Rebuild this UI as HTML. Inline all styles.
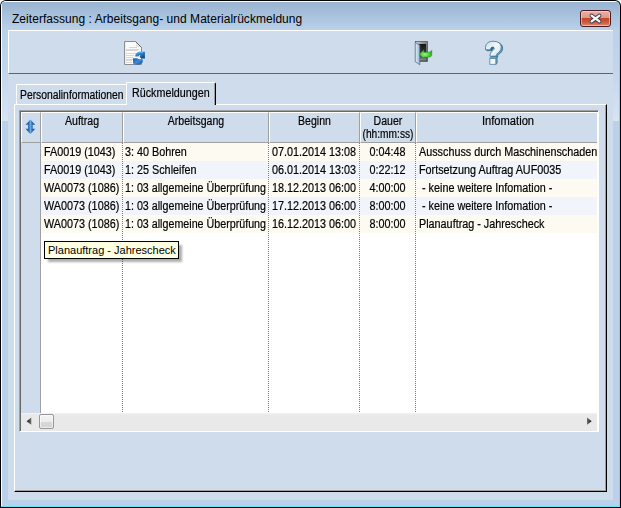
<!DOCTYPE html>
<html><head><meta charset="utf-8">
<style>
*{margin:0;padding:0;box-sizing:border-box}
html,body{width:621px;height:508px;overflow:hidden;background:#fff}
body{position:relative;font-family:"Liberation Sans",sans-serif;color:#000}
.a{position:absolute}
.t{position:absolute;white-space:pre;font-size:12px;line-height:normal;transform-origin:0 0;transform:scaleX(0.9);-webkit-text-stroke:0.2px #000}
.tc{text-align:center;transform-origin:50% 0}
.tt{position:absolute;white-space:pre;font-size:11px;line-height:normal}
.hc{position:absolute;top:112px;height:31px;background:#cfdcec;border-left:1px solid #fff;border-top:1px solid #fff;border-right:1px solid #a0a0a0;border-bottom:1px solid #a0a0a0}
.ht{position:absolute;left:-20px;right:-20px;text-align:center;font-size:12px;line-height:normal;white-space:pre;transform:scaleX(0.88);transform-origin:50% 0;-webkit-text-stroke:0.2px #000}
.dv{position:absolute;top:143px;width:1px;height:270px;background:repeating-linear-gradient(to bottom,#7a7a7a 0,#7a7a7a 1px,#fff 1px,#fff 2px)}
.row{position:absolute;left:41px;width:556px;height:18px}
</style></head><body>
<!-- window frame -->
<div class="a" style="left:0;top:0;width:621px;height:508px;background:#000;border-radius:6px 6px 0 0"></div>
<div class="a" style="left:1px;top:1px;width:619px;height:506px;background:#62e2f6;border-radius:5px 5px 0 0"></div>
<div class="a" style="left:1px;top:1px;width:618px;height:505px;background:#fff;border-radius:5px 5px 0 0"></div>
<div class="a" style="left:2px;top:2px;width:617px;height:504px;background:#b9d1ea;border-radius:3px 3px 0 0"></div>
<div class="a" style="left:2px;top:2px;width:617px;height:28px;background:linear-gradient(#99b4d1,#b9d1ea);border-radius:3px 3px 0 0"></div>
<div class="a" style="left:2px;top:30px;width:6px;height:91px;background:linear-gradient(rgba(255,255,255,0) 0,rgba(255,255,255,0.12) 45%,rgba(255,255,255,0.42) 100%)"></div>
<div class="a" style="left:613px;top:30px;width:6px;height:91px;background:linear-gradient(rgba(255,255,255,0) 0,rgba(255,255,255,0.12) 45%,rgba(255,255,255,0.42) 100%)"></div>
<!-- title -->
<div class="a" style="left:12px;top:13px;font-size:12px;line-height:12px;white-space:pre;letter-spacing:0.04px">Zeiterfassung : Arbeitsgang- und Materialrückmeldung</div>
<!-- close button -->
<div class="a" style="left:580px;top:10px;width:31px;height:17px;border:1px solid #4b1b24;border-radius:3px;background:linear-gradient(#eab0a3 0,#df9887 45%,#c5482a 50%,#cb5a3c 75%,#de8a74 100%);box-shadow:inset 0 0 0 1px rgba(255,225,215,0.55)"></div>
<svg class="a" style="left:586px;top:12px" width="20" height="14" viewBox="586 12 20 14">
 <path d="M591.6 15.6 L599.4 21.4 M599.4 15.6 L591.6 21.4" stroke="#39394a" stroke-width="4" stroke-linecap="round"/>
 <path d="M591.6 15.6 L599.4 21.4 M599.4 15.6 L591.6 21.4" stroke="#f6f6f6" stroke-width="2.3" stroke-linecap="round"/>
</svg>
<!-- client -->
<div class="a" style="left:8px;top:30px;width:605px;height:470px;background:#cfdcec"></div>
<!-- toolbar -->
<div class="a" style="left:8px;top:30px;width:605px;height:44px;border-top:1px solid #fff;border-left:1px solid #fff;border-bottom:1px solid #646464"></div>
<!-- doc refresh icon -->
<svg class="a" style="left:118px;top:36px" width="32" height="32" viewBox="118 36 32 32">
 <defs>
  <linearGradient id="pg" x1="0" x2="1"><stop offset="0" stop-color="#e6e6e6"/><stop offset="0.15" stop-color="#fdfdfd"/><stop offset="1" stop-color="#f6f6f6"/></linearGradient>
  <linearGradient id="bl" x1="0" y1="0" x2="1" y2="1"><stop offset="0" stop-color="#3f8fd8"/><stop offset="0.5" stop-color="#2a78c8"/><stop offset="1" stop-color="#0d3568"/></linearGradient>
  <linearGradient id="bl2" x1="0" y1="0" x2="1" y2="1"><stop offset="0" stop-color="#1d5fae"/><stop offset="0.5" stop-color="#3a8ad6"/><stop offset="1" stop-color="#174d90"/></linearGradient>
 </defs>
 <path d="M124.5 41.5 H135.5 L141.5 47.5 V64.5 H124.5 Z" fill="url(#pg)" stroke="#8e8e8e"/>
 <path d="M136 42 V47 H141 Z" fill="#e2e2e2"/>
 <path d="M135.5 41.5 L141.5 47.5" stroke="#6a6a6a"/>
 <g stroke="#d6d6d6" stroke-width="1">
  <path d="M129 47.5 H137 M126 49.5 H139 M126 50.5 H138 M126 53.5 H137 M126 55.5 H134 M126 57.5 H133 M126 59.5 H133 M126 60.5 H132 M126 62.5 H132"/>
 </g>
 <path d="M135.2 56.6 C135.2 53.6, 137.3 51.7, 140.3 51.7 H144.9 V58.6 H141.3 L139.5 57 L140.3 55.3 C139.6 55, 138.8 55.4, 138.5 56.6 Z" fill="url(#bl)"/>
 <path d="M133 58.2 H138.2 L136.6 60.4 C137.2 59.4, 137.8 59.1, 138.6 59 C140.2 59.2, 141.6 59.2, 142.8 59.6 V61.6 C142.6 63.6, 140.6 64.8, 137.6 64.8 H134.6 L133 63.3 Z" fill="url(#bl2)"/>
 <path d="M136.5 53.6 C137.5 52.8, 139 52.5, 140.5 52.6 H143" stroke="#8fd0ff" stroke-width="0.8" fill="none" opacity="0.7"/>
</svg>
<!-- door icon -->
<svg class="a" style="left:410px;top:38px" width="26" height="28" viewBox="410 38 26 28">
 <defs>
  <linearGradient id="fr" x1="0" y1="0" x2="1" y2="1"><stop offset="0" stop-color="#d8d8d8"/><stop offset="0.4" stop-color="#8a8a8a"/><stop offset="1" stop-color="#505050"/></linearGradient>
  <linearGradient id="dk" x1="0" y1="0" x2="0" y2="1"><stop offset="0" stop-color="#161616"/><stop offset="0.7" stop-color="#3a3a3a"/><stop offset="1" stop-color="#8c8c8c"/></linearGradient>
  <linearGradient id="lf" x1="0" x2="1"><stop offset="0" stop-color="#e4f0f8"/><stop offset="1" stop-color="#8fb5d4"/></linearGradient>
  <radialGradient id="gr" cx="0.45" cy="0.5" r="0.6"><stop offset="0" stop-color="#9af58a"/><stop offset="0.6" stop-color="#46cc32"/><stop offset="1" stop-color="#239b14"/></radialGradient>
 </defs>
 <rect x="415.5" y="41.5" width="12" height="20" fill="url(#fr)" stroke="#5a5a5a" stroke-width="0.8"/>
 <rect x="418" y="44" width="8" height="16" fill="url(#dk)"/>
 <path d="M415.2 42.6 L419.8 45 V64.8 L415.2 61.6 Z" fill="url(#lf)" stroke="#56687a" stroke-width="0.7"/>
 <path d="M419.3 54.2 L423.8 49.8 V52.2 H428.3 C430.3 52.2, 431.2 51.4, 431.8 50.3 V54.6 C431.8 56.4, 430.5 57.3, 428.4 57.3 H423.8 V58.7 Z" fill="url(#gr)" stroke="#2f8f22" stroke-width="0.5"/>
</svg>
<!-- help icon -->
<svg class="a" style="left:480px;top:38px" width="28" height="28" viewBox="480 38 28 28">
 <defs>
  <linearGradient id="qf" x1="0" y1="0" x2="1" y2="1"><stop offset="0" stop-color="#c9dde6"/><stop offset="0.5" stop-color="#f4f8fa"/><stop offset="1" stop-color="#cddfe8"/></linearGradient>
 </defs>
 <path id="qp" d="M485.5 47.6 C485.5 43.2, 489 41.3, 493.3 41.3 C498.2 41.3, 501.2 43.6, 501.2 47.4 C501.2 50.4, 499.4 52, 497.4 53.4 C496.4 54.2, 496.2 55, 496.2 56.2 H489.9 C489.9 53.6, 490.8 52.1, 492.8 50.6 C494 49.7, 494.4 48.9, 494.2 48.1 C494 47.3, 493.3 46.9, 492.4 47.1 C491.3 47.3, 490.6 48.1, 490.6 49.8 H485.5 Z" fill="#6b9cb6" stroke="#2f6a88" stroke-width="0.8" transform="translate(1.4 0.9)"/>
 <path d="M485.5 47.6 C485.5 43.2, 489 41.3, 493.3 41.3 C498.2 41.3, 501.2 43.6, 501.2 47.4 C501.2 50.4, 499.4 52, 497.4 53.4 C496.4 54.2, 496.2 55, 496.2 56.2 H489.9 C489.9 53.6, 490.8 52.1, 492.8 50.6 C494 49.7, 494.4 48.9, 494.2 48.1 C494 47.3, 493.3 46.9, 492.4 47.1 C491.3 47.3, 490.6 48.1, 490.6 49.8 H485.5 Z" fill="url(#qf)" stroke="#3b7595" stroke-width="0.8"/>
 <path d="M492.4 47.1 C491.3 47.3, 490.6 48.1, 490.6 49.8 L492 50.7 C492.2 49.6, 493 48.9, 494.2 48.1 C494 47.3, 493.3 46.9, 492.4 47.1 Z" fill="#2f6584"/>
 <path d="M489.8 58.4 L491.2 57.1 H497.2 L495.8 58.4 Z" fill="#a9c8d8" stroke="#3b7595" stroke-width="0.7"/>
 <path d="M495.8 58.4 L497.2 57.1 V63.2 L495.8 64.4 Z" fill="#7eaac0" stroke="#3b7595" stroke-width="0.7"/>
 <path d="M489.8 58.4 H495.8 V64.4 H489.8 Z" fill="#f2f6f8" stroke="#3b7595" stroke-width="0.7"/>
</svg>
<!-- tab panel -->
<div class="a" style="left:14px;top:104px;width:593px;height:388px;border-left:1px solid #fff;border-top:1px solid #fff;border-right:1px solid #000;border-bottom:1px solid #000;box-shadow:inset -1px -1px 0 #a0a0a0"></div>
<!-- unselected tab -->
<div class="a" style="left:16px;top:84px;width:110px;height:20px;border-left:1px solid #fff;border-top:1px solid #fff;border-radius:2px 0 0 0"></div>
<div class="t" style="left:20px;top:88px;transform:scaleX(0.862)">Personalinformationen</div>
<!-- selected tab -->
<div class="a" style="left:126px;top:82px;width:90px;height:23px;background:#cfdcec;border-left:1px solid #fff;border-top:1px solid #fff;border-right:1px solid #000;border-radius:2px 2px 0 0;box-shadow:inset -1px 0 0 #a0a0a0"></div>
<div class="t" style="left:132px;top:86px;transform:scaleX(0.895)">Rückmeldungen</div>
<!-- grid -->
<div class="a" style="left:19px;top:110px;width:580px;height:322px;background:#fff;border-left:1px solid #a0a0a0;border-top:1px solid #a0a0a0;border-right:1px solid #fff;border-bottom:1px solid #fff;box-shadow:inset 1px 1px 0 #696969"></div>
<div class="a" style="left:21px;top:112px;width:576px;height:319px;overflow:hidden">
</div>
<!-- header -->
<div class="a" style="left:21px;top:112px;width:576px;height:31px;overflow:hidden">
 <div class="hc" style="left:0;top:0;width:20px"></div>
 <div class="hc" style="left:20px;top:0;width:82px"><div class="ht" style="top:1px">Auftrag</div></div>
 <div class="hc" style="left:102px;top:0;width:146px"><div class="ht" style="top:1px">Arbeitsgang</div></div>
 <div class="hc" style="left:248px;top:0;width:91px"><div class="ht" style="top:1px">Beginn</div></div>
 <div class="hc" style="left:339px;top:0;width:56px"><div class="ht" style="top:1px">Dauer</div><div class="ht" style="top:14px;transform:scaleX(0.85)">(hh:mm:ss)</div></div>
 <div class="hc" style="left:395px;top:0;width:184px"><div class="ht" style="top:1px;transform:scaleX(0.93)">Infomation</div></div>
</div>
<!-- sort arrow -->
<svg class="a" style="left:22px;top:116px" width="18" height="22" viewBox="22 116 18 22">
 <defs><linearGradient id="ag" x1="25.6" x2="35.2" gradientUnits="userSpaceOnUse"><stop offset="0" stop-color="#164a8e"/><stop offset="0.35" stop-color="#2a72bc"/><stop offset="0.52" stop-color="#6fb0e6"/><stop offset="0.66" stop-color="#2a72bc"/><stop offset="1" stop-color="#164a8e"/></linearGradient></defs>
 <path d="M30.4 119.6 L35.2 124.8 H32.7 V128.8 H35.2 L30.4 134.2 L25.6 128.8 H28.1 V124.8 H25.6 Z" fill="url(#ag)"/>
</svg>
<!-- indicator column -->
<div class="a" style="left:21px;top:143px;width:20px;height:270px;background:#cfdcec;border-right:1px solid #a0a0a0"></div>
<!-- rows -->
<div class="row" style="top:143px;background:#fcfaf1"></div>
<div class="row" style="top:161px;background:#f1f5fb"></div>
<div class="row" style="top:179px;background:#fcfaf1"></div>
<div class="row" style="top:197px;background:#f1f5fb"></div>
<div class="row" style="top:215px;background:#fcfaf1"></div>
<div class="dv" style="left:122px"></div>
<div class="dv" style="left:268px"></div>
<div class="dv" style="left:359px"></div>
<div class="dv" style="left:415px"></div>
<!-- row text -->
<div class="t" style="left:44px;top:145px">FA0019 (1043)</div>
<div class="t" style="left:125px;top:145px">3: 40 Bohren</div>
<div class="t" style="left:272px;top:145px">07.01.2014 13:08</div>
<div class="t tc" style="left:340px;width:95px;top:145px">0:04:48</div>
<div class="t" style="left:419px;top:145px">Ausschuss durch Maschinenschaden</div>

<div class="t" style="left:44px;top:163px">FA0019 (1043)</div>
<div class="t" style="left:125px;top:163px">1: 25 Schleifen</div>
<div class="t" style="left:272px;top:163px">06.01.2014 13:03</div>
<div class="t tc" style="left:340px;width:95px;top:163px">0:22:12</div>
<div class="t" style="left:419px;top:163px">Fortsetzung Auftrag AUF0035</div>

<div class="t" style="left:44px;top:181px">WA0073 (1086)</div>
<div class="t" style="left:125px;top:181px;transform:scaleX(0.892)">1: 03 allgemeine Überprüfung</div>
<div class="t" style="left:272px;top:181px">18.12.2013 06:00</div>
<div class="t tc" style="left:340px;width:95px;top:181px">4:00:00</div>
<div class="t" style="left:419px;top:181px"> - keine weitere Infomation -</div>

<div class="t" style="left:44px;top:199px">WA0073 (1086)</div>
<div class="t" style="left:125px;top:199px;transform:scaleX(0.892)">1: 03 allgemeine Überprüfung</div>
<div class="t" style="left:272px;top:199px">17.12.2013 06:00</div>
<div class="t tc" style="left:340px;width:95px;top:199px">8:00:00</div>
<div class="t" style="left:419px;top:199px"> - keine weitere Infomation -</div>

<div class="t" style="left:44px;top:217px">WA0073 (1086)</div>
<div class="t" style="left:125px;top:217px;transform:scaleX(0.892)">1: 03 allgemeine Überprüfung</div>
<div class="t" style="left:272px;top:217px">16.12.2013 06:00</div>
<div class="t tc" style="left:340px;width:95px;top:217px">8:00:00</div>
<div class="t" style="left:419px;top:217px">Planauftrag - Jahrescheck</div>
<!-- scrollbar -->
<div class="a" style="left:21px;top:413px;width:576px;height:18px;background:linear-gradient(#f3f3f3 0,#e9e9e9 2px,#e9e9e9 100%)"></div>
<svg class="a" style="left:24px;top:414px" width="12" height="14" viewBox="24 414 12 14"><defs><linearGradient id="la" x1="26.5" x2="31.5" gradientUnits="userSpaceOnUse"><stop offset="0" stop-color="#111"/><stop offset="1" stop-color="#777"/></linearGradient></defs><path d="M31.3 417.6 V424.8 L26.6 421.2 Z" fill="url(#la)"/></svg>
<svg class="a" style="left:584px;top:414px" width="12" height="14" viewBox="584 414 12 14"><defs><linearGradient id="ra" x1="586.8" x2="591.8" gradientUnits="userSpaceOnUse"><stop offset="0" stop-color="#777"/><stop offset="1" stop-color="#111"/></linearGradient></defs><path d="M587 417.6 V424.8 L591.7 421.2 Z" fill="url(#ra)"/></svg>
<div class="a" style="left:39px;top:414px;width:15px;height:15px;border:1px solid #979797;border-radius:2px;background:linear-gradient(#f4f4f4 0,#ececec 50%,#d9d9d9 51%,#d2d2d2 100%);box-shadow:inset 0 0 0 1px rgba(255,255,255,0.6)"></div>
<!-- tooltip -->
<div class="a" style="left:48px;top:245px;width:134px;height:17px;background:rgba(0,0,0,0.32);filter:blur(1.3px)"></div>
<div class="a" style="left:44px;top:241px;width:135px;height:18px;background:#ffffe1;border:1px solid #000"></div>
<div class="tt" style="left:48px;top:244px">Planauftrag - Jahrescheck</div>
</body></html>
